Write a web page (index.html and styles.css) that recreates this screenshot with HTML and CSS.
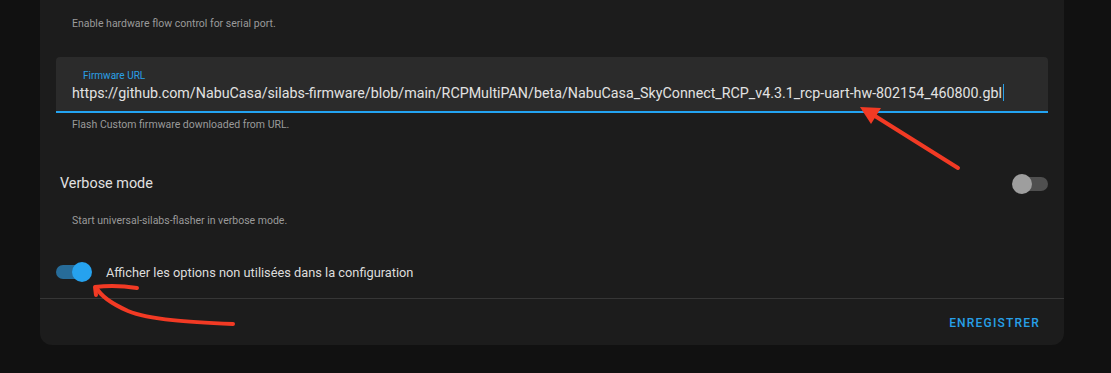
FILE: index.html
```html
<!DOCTYPE html>
<html>
<head>
<meta charset="utf-8">
<link rel="stylesheet" href="styles.css">
</head>
<body>
<div class="card">
  <div class="content">
    <div class="desc first">Enable hardware flow control for serial port.</div>
    <div class="field">
      <div class="field-label">Firmware URL</div>
      <div class="field-value">https://github.com/NabuCasa/silabs-firmware/blob/main/RCPMultiPAN/beta/NabuCasa_SkyConnect_RCP_v4.3.1_rcp-uart-hw-802154_460800.gbl<span class="caret"></span></div>
    </div>
    <div class="desc helper">Flash Custom firmware downloaded from URL.</div>
    <div class="row">
      <div class="row-title">Verbose mode</div>
      <div class="switch off"><div class="track"></div><div class="thumb"></div></div>
    </div>
    <div class="desc second">Start universal-silabs-flasher in verbose mode.</div>
    <div class="show-row">
      <div class="switch on"><div class="track"></div><div class="thumb"></div></div>
      <div class="show-label">Afficher les options non utilisées dans la configuration</div>
    </div>
  </div>
  <div class="actions">
    <button class="btn">ENREGISTRER</button>
  </div>
</div>
<svg class="annot" width="1111" height="373" viewBox="0 0 1111 373">
  <line x1="958" y1="168" x2="875" y2="116" stroke="#f23a24" stroke-width="4" stroke-linecap="round"/>
  <polygon points="860,107 881,108 871,124" fill="#f23a24"/>
  <path d="M233 324 C 190 322, 150 320, 128 311 C 110 303, 100 295, 96 287" fill="none" stroke="#f23a24" stroke-width="4" stroke-linecap="round"/>
  <path d="M96 295 L95 287 C 110 285, 125 286, 137 288" fill="none" stroke="#f23a24" stroke-width="4" stroke-linecap="round" stroke-linejoin="round"/>
</svg>
</body>
</html>
```
FILE: styles.css
```css
html, body {
  margin: 0;
  padding: 0;
  background: #111111;
  font-family: Roboto, "Noto Sans", sans-serif;
  width: 1111px;
  height: 373px;
  overflow: hidden;
  position: relative;
}
.card {
  margin-left: 40px;
  width: 1024px;
  background: #1c1c1c;
  border-radius: 0 0 12px 12px;
}
.content {
  padding: 0 16px;
}
.desc {
  font-size: 10.5px;
  color: #9a9a9a;
  padding-left: 16px;
  line-height: 14px;
}
.desc.first {
  padding-top: 17px;
  height: 57px;
  box-sizing: border-box;
}
.field {
  background: #2b2b2b;
  border-radius: 4px 4px 0 0;
  border-bottom: 2px solid #23a3f1;
  height: 56px;
  box-sizing: border-box;
  padding: 12px 16px 0 16px;
}
.field-label {
  font-size: 10px;
  color: #2aa0e6;
  padding-left: 11px;
  line-height: 14px;
}
.field-value {
  font-size: 14.25px;
  color: #e2e2e2;
  line-height: 20px;
  white-space: nowrap;
}
.caret {
  display: inline-block;
  width: 1.5px;
  height: 17px;
  background: #2aa0e6;
  vertical-align: -3px;
  margin-left: 1px;
}
.desc.helper {
  padding-top: 5px;
  height: 27px;
  box-sizing: border-box;
}
.row {
  display: flex;
  align-items: center;
  justify-content: space-between;
  height: 32px;
  margin-top: 27px;
  padding-left: 4px;
}
.row-title {
  font-size: 14.4px;
  color: #e1e1e1;
}
.desc.second {
  margin-top: 15px;
  height: 14px;
}
.switch {
  position: relative;
  width: 34px;
  height: 20px;
}
.switch .track {
  position: absolute;
  left: 0;
  top: 3px;
  width: 34px;
  height: 14px;
  border-radius: 7px;
}
.switch .thumb {
  position: absolute;
  top: 0;
  width: 20px;
  height: 20px;
  border-radius: 50%;
}
.switch.off {
  width: 36px;
  margin-top: 2px;
}
.switch.off .track {
  left: 10px;
  width: 26px;
  background: #4f4f4f;
}
.switch.off .thumb {
  left: 0;
  background: #9e9e9e;
}
.switch.on .track {
  background: #276c99;
}
.switch.on .thumb {
  left: 16px;
  background: #26a2ee;
}
.show-row {
  display: flex;
  align-items: center;
  gap: 16px;
  margin-top: 31px;
  height: 26px;
  padding-bottom: 13px;
}
.show-label {
  font-size: 12.8px;
  color: #dcdcdc;
}
.actions {
  border-top: 1px solid #363636;
  height: 46px;
  display: flex;
  justify-content: flex-end;
  align-items: center;
  padding-right: 24px;
}
.btn {
  background: none;
  border: none;
  font-family: Roboto, sans-serif;
  font-weight: 500;
  font-size: 12px;
  letter-spacing: 1.2px;
  color: #27a0e8;
  padding: 0;
  margin-top: 2px;
}
.annot {
  position: absolute;
  left: 0;
  top: 0;
  pointer-events: none;
}
```
